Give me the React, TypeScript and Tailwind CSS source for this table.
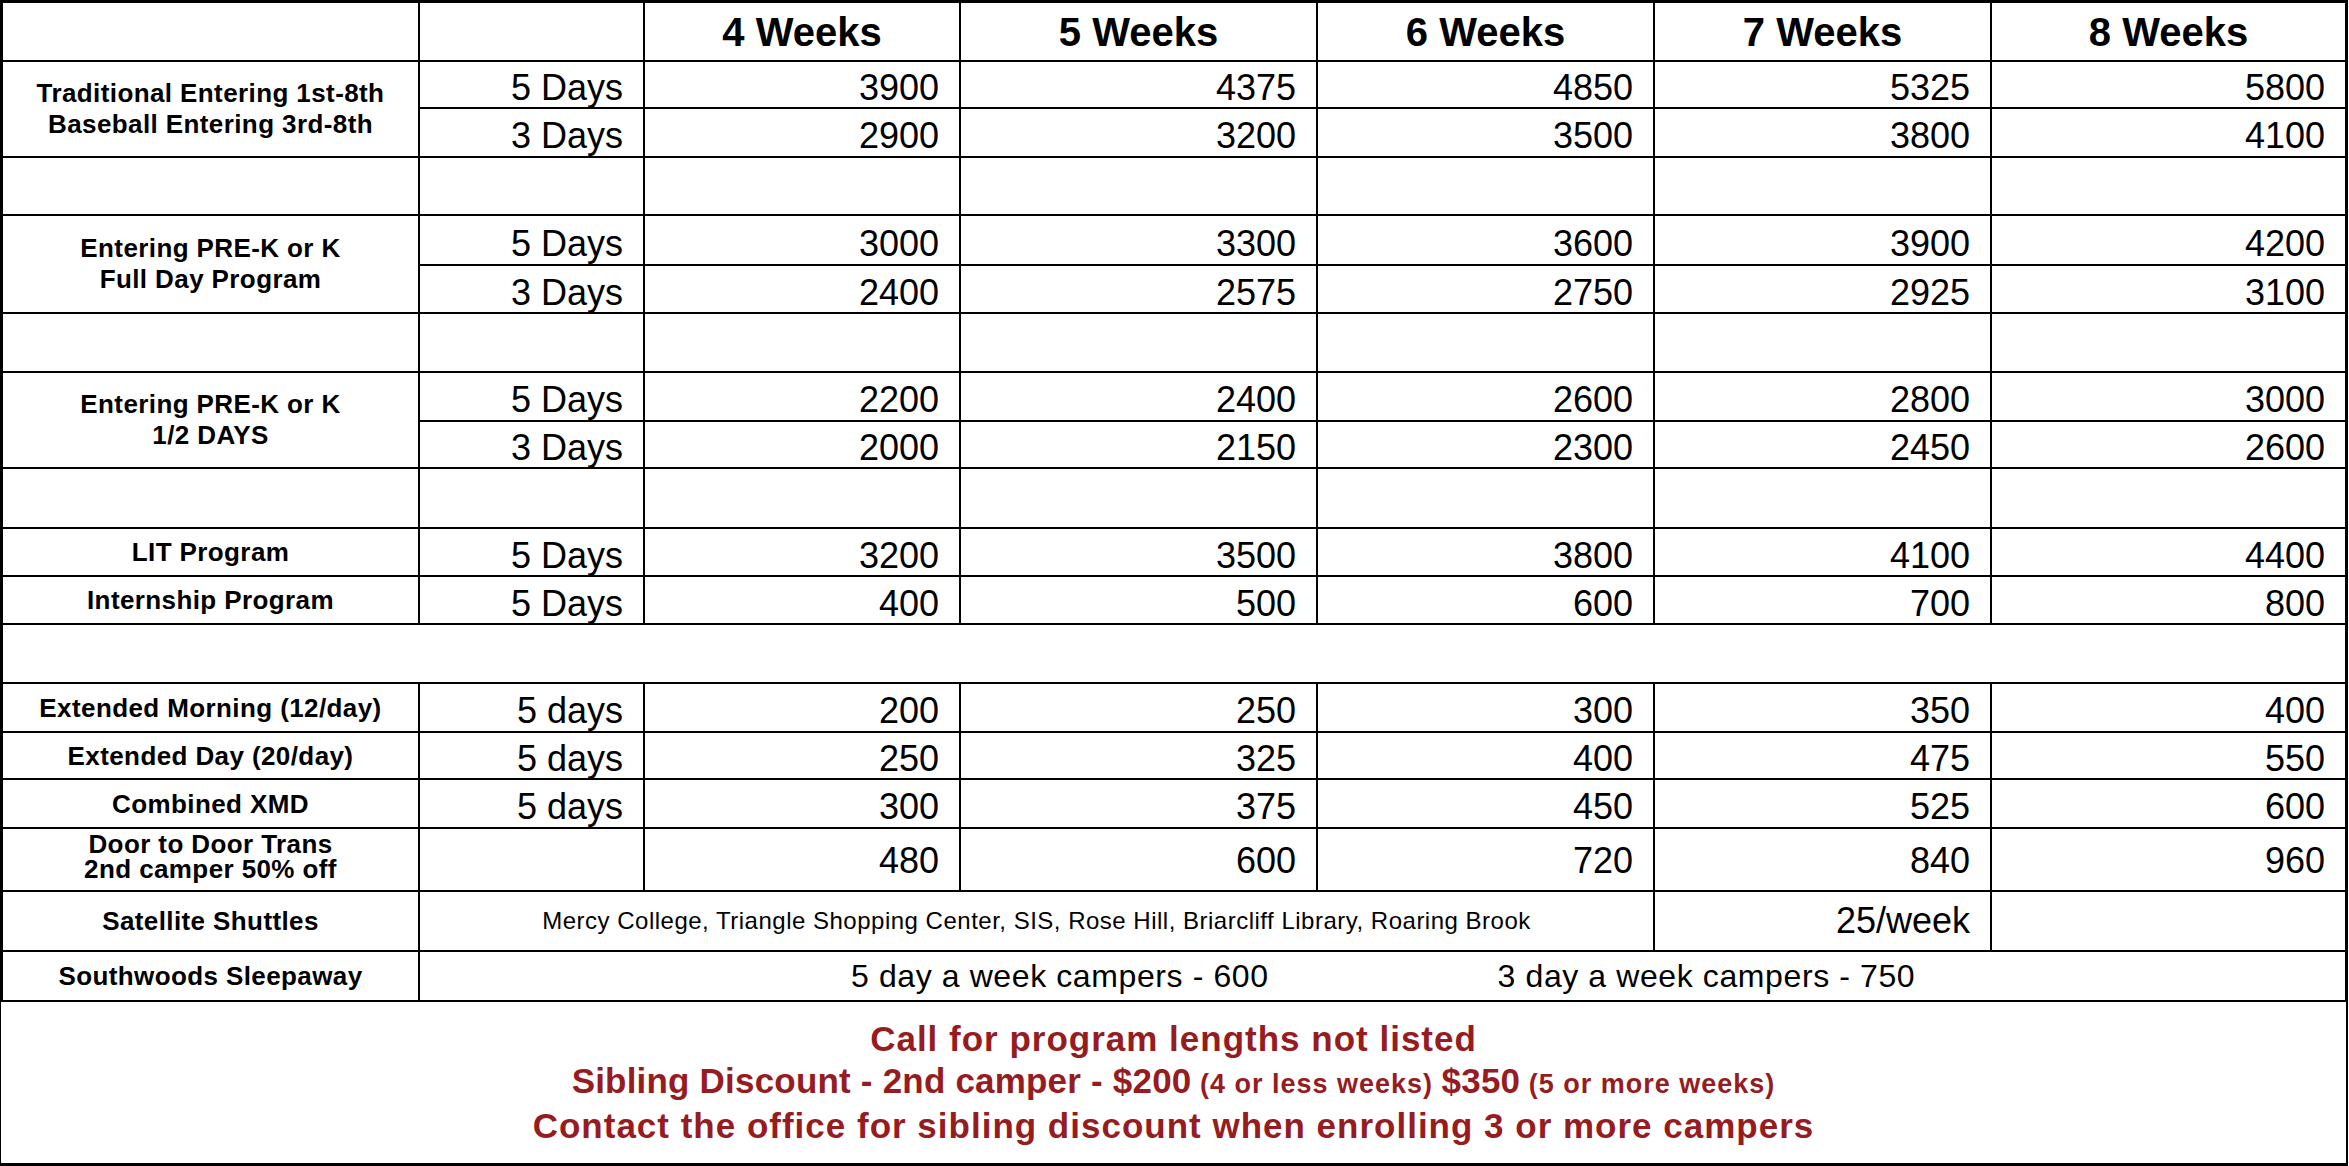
import React from 'react';

type PriceRow = {
  days: string;
  prices: string[];
};

type Group = {
  label: string[];
  rows: PriceRow[];
};

const weeks = ['4 Weeks', '5 Weeks', '6 Weeks', '7 Weeks', '8 Weeks'];

const topGroups: Group[] = [
  {
    label: ['Traditional Entering 1st-8th', 'Baseball Entering 3rd-8th'],
    rows: [
      { days: '5 Days', prices: ['3900', '4375', '4850', '5325', '5800'] },
      { days: '3 Days', prices: ['2900', '3200', '3500', '3800', '4100'] },
    ],
  },
  {
    label: ['Entering PRE-K or K', 'Full Day Program'],
    rows: [
      { days: '5 Days', prices: ['3000', '3300', '3600', '3900', '4200'] },
      { days: '3 Days', prices: ['2400', '2575', '2750', '2925', '3100'] },
    ],
  },
  {
    label: ['Entering PRE-K or K', '1/2 DAYS'],
    rows: [
      { days: '5 Days', prices: ['2200', '2400', '2600', '2800', '3000'] },
      { days: '3 Days', prices: ['2000', '2150', '2300', '2450', '2600'] },
    ],
  },
];

const programs = [
  { label: 'LIT Program', days: '5 Days', prices: ['3200', '3500', '3800', '4100', '4400'] },
  { label: 'Internship Program', days: '5 Days', prices: ['400', '500', '600', '700', '800'] },
];

const extras = [
  { label: 'Extended Morning (12/day)', days: '5 days', prices: ['200', '250', '300', '350', '400'] },
  { label: 'Extended Day (20/day)', days: '5 days', prices: ['250', '325', '400', '475', '550'] },
  { label: 'Combined XMD', days: '5 days', prices: ['300', '375', '450', '525', '600'] },
];

function Label({ lines, className = 'leading-[24px]' }: { lines: string[]; className?: string }) {
  return (
    <div
      className={`bg-white flex flex-col items-center justify-center text-center text-[26px] font-bold tracking-[0.4px] text-black ${className}`}
    >
      {lines.map((line) => (
        <span key={line}>{line}</span>
      ))}
    </div>
  );
}

function Num({ value }: { value?: string }) {
  return (
    <div className="bg-white flex items-center justify-end pr-[20px] pt-[7px] text-[36px] leading-none text-black">
      {value}
    </div>
  );
}

function Blank() {
  return <div className="bg-white" />;
}

function SpacerRow() {
  return (
    <>
      {Array.from({ length: 7 }).map((_, i) => (
        <Blank key={i} />
      ))}
    </>
  );
}

export default function App() {
  return (
    <div className="w-[2348px] bg-white font-['Liberation_Sans',Arial,sans-serif]">
      {/* Price grid */}
      <div className="grid grid-cols-[415px_223px_314px_355px_335px_335px_353px] grid-rows-[57px_45px_47px_56px_48px_46px_57px_47px_45px_58px_46px_46px_57px_47px_45px_47px_61px_58px_48px] gap-[2px] bg-black pt-[3px] px-[3px] pb-[2px]">
        {/* Header */}
        <Blank />
        <Blank />
        {weeks.map((w) => (
          <div key={w} className="bg-white flex items-center justify-center text-[40px] font-bold leading-none text-black">
            {w}
          </div>
        ))}

        {topGroups.map((group, gi) => (
          <React.Fragment key={gi}>
            <Label lines={group.label} className="row-span-2 leading-[31px]" />
            {group.rows.map((row, ri) => (
              <React.Fragment key={ri}>
                <Num value={row.days} />
                {row.prices.map((p, pi) => (
                  <Num key={pi} value={p} />
                ))}
              </React.Fragment>
            ))}
            <SpacerRow />
          </React.Fragment>
        ))}

        {programs.map((row) => (
          <React.Fragment key={row.label}>
            <Label lines={[row.label]} />
            <Num value={row.days} />
            {row.prices.map((p, pi) => (
              <Num key={pi} value={p} />
            ))}
          </React.Fragment>
        ))}

        <div className="col-span-7 bg-white" />

        {extras.map((row) => (
          <React.Fragment key={row.label}>
            <Label lines={[row.label]} />
            <Num value={row.days} />
            {row.prices.map((p, pi) => (
              <Num key={pi} value={p} />
            ))}
          </React.Fragment>
        ))}

        {/* Door to door */}
        <Label lines={['Door to Door Trans', '2nd camper 50% off']} className="leading-[25px] pb-[6px]" />
        <Blank />
        {['480', '600', '720', '840', '960'].map((p) => (
          <div key={p} className="bg-white flex items-center justify-end pr-[20px] pt-[2px] text-[36px] leading-none text-black">
            {p}
          </div>
        ))}

        {/* Satellite shuttles */}
        <Label lines={['Satellite Shuttles']} />
        <div className="col-span-4 bg-white flex items-center justify-center text-[24px] tracking-[0.5px] text-black">
          Mercy College, Triangle Shopping Center, SIS, Rose Hill, Briarcliff Library, Roaring Brook
        </div>
        <div className="bg-white flex items-center justify-end pr-[20px] text-[36px] leading-none text-black">
          25/week
        </div>
        <Blank />

        {/* Sleepaway */}
        <Label lines={['Southwoods Sleepaway']} />
        <div className="col-span-6 bg-white flex items-center gap-[229px] pl-[431px] text-[32px] tracking-[0.6px] leading-none text-black">
          <span>5 day a week campers - 600</span>
          <span>3 day a week campers - 750</span>
        </div>
      </div>

      {/* Notes */}
      <div className="h-[164px] border-l border-r-2 border-b-[3px] border-black flex flex-col items-center justify-center text-[#961c1f] font-bold text-[35px] tracking-[1px] leading-[42px]">
        <p>Call for program lengths not listed</p>
        <p className="tracking-[0.2px]">
          Sibling Discount - 2nd camper - $200
          <span className="text-[27px] tracking-[1px]"> (4 or less weeks) </span>
          $350
          <span className="text-[27px] tracking-[1px]"> (5 or more weeks)</span>
        </p>
        <p>Contact the office for sibling discount when enrolling 3 or more campers</p>
      </div>
    </div>
  );
}
